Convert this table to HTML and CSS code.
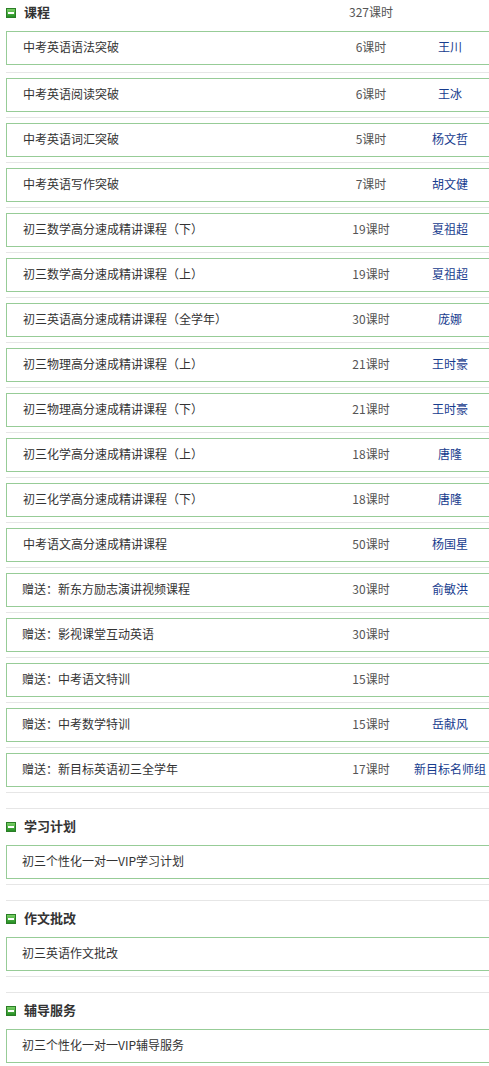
FILE: index.html
```html
<!DOCTYPE html>
<html lang="zh-CN">
<head>
<meta charset="utf-8">
<title>课程</title>
<link rel="stylesheet" href="styles.css">
</head>
<body>
<div class="wrap">
  <div class="section first">
    <div class="head">
      <svg class="icon" viewBox="0 0 10 10" width="10" height="10"><defs><linearGradient id="g1" x1="0" y1="0" x2="0" y2="1"><stop offset="0" stop-color="#7fd46a"/><stop offset="1" stop-color="#1f8a1f"/></linearGradient></defs><rect x="0.5" y="0.5" width="9" height="9" fill="url(#g1)" stroke="#2a7d26"/><rect x="2" y="4" width="6" height="2" fill="#fff"/></svg>
      <span class="title">课程</span>
      <span class="hrs">327课时</span>
      <span class="teacher"></span>
    </div>
    <div class="row"><div class="box"><span class="name">中考英语语法突破</span><span class="hrs">6课时</span><span class="teacher">王川</span></div></div>
    <div class="row"><div class="box"><span class="name">中考英语阅读突破</span><span class="hrs">6课时</span><span class="teacher">王冰</span></div></div>
    <div class="row"><div class="box"><span class="name">中考英语词汇突破</span><span class="hrs">5课时</span><span class="teacher">杨文哲</span></div></div>
    <div class="row"><div class="box"><span class="name">中考英语写作突破</span><span class="hrs">7课时</span><span class="teacher">胡文健</span></div></div>
    <div class="row"><div class="box"><span class="name">初三数学高分速成精讲课程（下）</span><span class="hrs">19课时</span><span class="teacher">夏祖超</span></div></div>
    <div class="row"><div class="box"><span class="name">初三数学高分速成精讲课程（上）</span><span class="hrs">19课时</span><span class="teacher">夏祖超</span></div></div>
    <div class="row"><div class="box"><span class="name">初三英语高分速成精讲课程（全学年）</span><span class="hrs">30课时</span><span class="teacher">庞娜</span></div></div>
    <div class="row"><div class="box"><span class="name">初三物理高分速成精讲课程（上）</span><span class="hrs">21课时</span><span class="teacher">王时豪</span></div></div>
    <div class="row"><div class="box"><span class="name">初三物理高分速成精讲课程（下）</span><span class="hrs">21课时</span><span class="teacher">王时豪</span></div></div>
    <div class="row"><div class="box"><span class="name">初三化学高分速成精讲课程（上）</span><span class="hrs">18课时</span><span class="teacher">唐隆</span></div></div>
    <div class="row"><div class="box"><span class="name">初三化学高分速成精讲课程（下）</span><span class="hrs">18课时</span><span class="teacher">唐隆</span></div></div>
    <div class="row"><div class="box"><span class="name">中考语文高分速成精讲课程</span><span class="hrs">50课时</span><span class="teacher">杨国星</span></div></div>
    <div class="row"><div class="box gift"><span class="name">赠送：新东方励志演讲视频课程</span><span class="hrs">30课时</span><span class="teacher">俞敏洪</span></div></div>
    <div class="row"><div class="box gift"><span class="name">赠送：影视课堂互动英语</span><span class="hrs">30课时</span><span class="teacher"></span></div></div>
    <div class="row"><div class="box gift"><span class="name">赠送：中考语文特训</span><span class="hrs">15课时</span><span class="teacher"></span></div></div>
    <div class="row"><div class="box gift"><span class="name">赠送：中考数学特训</span><span class="hrs">15课时</span><span class="teacher">岳献风</span></div></div>
    <div class="row"><div class="box gift"><span class="name">赠送：新目标英语初三全学年</span><span class="hrs">17课时</span><span class="teacher">新目标名师组</span></div></div>
  </div>

  <div class="section">
    <div class="head">
      <svg class="icon" viewBox="0 0 10 10" width="10" height="10"><defs><linearGradient id="g2" x1="0" y1="0" x2="0" y2="1"><stop offset="0" stop-color="#7fd46a"/><stop offset="1" stop-color="#1f8a1f"/></linearGradient></defs><rect x="0.5" y="0.5" width="9" height="9" fill="url(#g2)" stroke="#2a7d26"/><rect x="2" y="4" width="6" height="2" fill="#fff"/></svg>
      <span class="title">学习计划</span>
    </div>
    <div class="row"><div class="box gift"><span class="name">初三个性化一对一VIP学习计划</span></div></div>
  </div>

  <div class="section">
    <div class="head">
      <svg class="icon" viewBox="0 0 10 10" width="10" height="10"><defs><linearGradient id="g3" x1="0" y1="0" x2="0" y2="1"><stop offset="0" stop-color="#7fd46a"/><stop offset="1" stop-color="#1f8a1f"/></linearGradient></defs><rect x="0.5" y="0.5" width="9" height="9" fill="url(#g3)" stroke="#2a7d26"/><rect x="2" y="4" width="6" height="2" fill="#fff"/></svg>
      <span class="title">作文批改</span>
    </div>
    <div class="row"><div class="box gift"><span class="name">初三英语作文批改</span></div></div>
  </div>

  <div class="section">
    <div class="head">
      <svg class="icon" viewBox="0 0 10 10" width="10" height="10"><defs><linearGradient id="g4" x1="0" y1="0" x2="0" y2="1"><stop offset="0" stop-color="#7fd46a"/><stop offset="1" stop-color="#1f8a1f"/></linearGradient></defs><rect x="0.5" y="0.5" width="9" height="9" fill="url(#g4)" stroke="#2a7d26"/><rect x="2" y="4" width="6" height="2" fill="#fff"/></svg>
      <span class="title">辅导服务</span>
    </div>
    <div class="row"><div class="box gift"><span class="name">初三个性化一对一VIP辅导服务</span></div></div>
  </div>
</div>
</body>
</html>
```

FILE: styles.css
```css
html {
  overflow: hidden;
}
html, body {
  margin: 0;
  padding: 0;
  background: #fff;
}
body {
  font-family: "Noto Sans CJK SC", "Liberation Sans", sans-serif;
  font-size: 12px;
  color: #333;
}
.wrap {
  padding-left: 6px;
}
.section {
  border-top: 1px solid #e6e6e6;
  margin-top: 15px;
}
.section.first {
  border-top: 0;
  margin-top: -5px;
}
.head {
  height: 36px;
  display: flex;
  align-items: center;
}
.icon {
  flex: none;
  width: 10px;
  height: 10px;
  margin-right: 8px;
}
.head .title,
.head .hrs {
  margin-bottom: 3px;
}
.title {
  flex: 1;
  font-size: 13px;
  font-weight: bold;
  color: #333;
}
.row {
  padding-bottom: 5px;
  border-bottom: 1px solid #e6e6e6;
  margin-bottom: 5px;
}
.section.first .row:nth-child(2) {
  padding-bottom: 7px;
}
.row:last-child {
  margin-bottom: 0;
}
.box {
  height: 29px;
  padding-bottom: 3px;
  display: flex;
  align-items: center;
  border: 1px solid #97cc97;
  border-right: 0;
  padding-left: 16px;
}
.box.gift {
  padding-left: 15px;
}
.name {
  flex: 1;
}
.hrs {
  flex: none;
  width: 80px;
  text-align: center;
  color: #555;
}
.teacher {
  flex: none;
  width: 78px;
  text-align: center;
  color: #173c8e;
}
```
